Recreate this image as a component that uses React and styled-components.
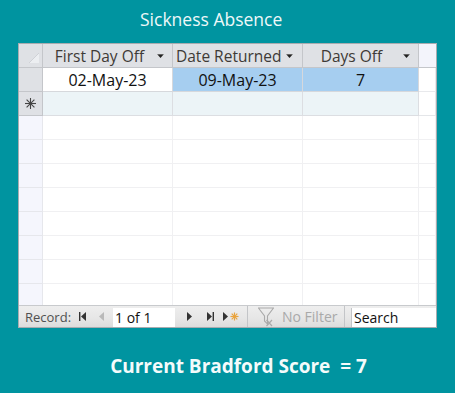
import React from "react";
import styled, { createGlobalStyle } from "styled-components";

const Global = createGlobalStyle`
  html, body { margin: 0; padding: 0; background: #0094a0; }
  body { font-family: "Open Sans", "Noto Sans", sans-serif; }
`;

const Page = styled.div`
  width: 455px;
  height: 393px;
  background: #0094a0;
  display: flex;
  flex-direction: column;
  overflow: hidden;
`;

const Title = styled.div`
  height: 43px;
  padding-left: 140px;
  padding-top: 7px;
  box-sizing: border-box;
  color: #eef8f9;
  font-size: 17.5px;
  line-height: 24px;
  font-family: "Open Sans", sans-serif;
`;

const Frame = styled.div`
  margin-left: 18px;
  width: 417px;
  border: 1px solid #a9acb0;
  display: flex;
  flex-direction: column;
  background: #fff;
`;

const Sheet = styled.div`
  height: 261px;
  overflow: hidden;
  display: flex;
  flex-direction: column;
`;

const Row = styled.div`
  display: grid;
  grid-template-columns: 24px 130px 130px 116px 1fr;
  height: 24px;
  flex: none;
`;

const Cell = styled.div`
  box-sizing: border-box;
  border-right: 1px solid ${(p) => p.$line || "#e2e4e8"};
  border-bottom: 1px solid ${(p) => p.$line || "#e2e4e8"};
  background: ${(p) => p.$bg || "#fff"};
  display: flex;
  align-items: center;
  justify-content: center;
  font-size: 16px;
  color: #111;
  position: relative;
`;

const Selector = styled(Cell)`
  background: ${(p) => p.$bg || "#dfe1e5"};
  border-color: ${(p) => p.$line || "#c4c6ca"};
`;

const HeadCell = styled(Cell)`
  background: ${(p) => p.$bg || "#dfe1e5"};
  border-color: #c4c6ca;
  color: #3e3a36;
  font-size: 15.5px;
  justify-content: ${(p) => (p.$left ? "flex-start" : "center")};
  padding-left: ${(p) => (p.$left ? "3px" : "0")};
  padding-right: ${(p) => p.$pr ?? 16}px;
`;

const Arrow = styled.svg`
  position: absolute;
  right: ${(p) => p.$r || 8}px;
  top: 10px;
`;

const Corner = styled.svg`
  position: absolute;
  right: 2px;
  bottom: 3px;
`;

const NavBar = styled.div`
  height: 22px;
  box-sizing: border-box;
  border-top: 1px solid #c8cacd;
  background: linear-gradient(#eeeeee, #e6e6e6 60%, #dcdcdc);
  display: flex;
  align-items: stretch;
  font-size: 14px;
`;

const NavLabel = styled.div`
  padding-left: 6px;
  width: 60px;
  box-sizing: border-box;
  display: flex;
  align-items: center;
  color: #505050;
  font-size: 13px;
`;

const IconBox = styled.div`
  width: ${(p) => p.$w}px;
  margin-left: ${(p) => p.$ml || 0}px;
  display: flex;
  align-items: center;
  justify-content: flex-start;
  flex: none;
`;

const TextBox = styled.div`
  width: 62px;
  margin: 2px 0 0 9px;
  background: #fff;
  display: flex;
  align-items: center;
  padding-left: 2px;
  box-sizing: border-box;
  color: #111;
  font-size: 14px;
`;

const Sep = styled.div`
  width: 1px;
  margin-left: ${(p) => p.$ml || 0}px;
  background: #c3c5c8;
`;

const Filter = styled.div`
  width: 96px;
  display: flex;
  align-items: center;
  padding-left: 10px;
  gap: 8px;
  box-sizing: border-box;
  color: #a9a9a9;
  font-size: 14px;
`;

const Search = styled.div`
  flex: 1;
  margin: 2px 0 0 6px;
  background: #fff;
  border-left: 1px solid #c3c5c8;
  display: flex;
  align-items: center;
  padding-left: 2px;
  color: #111;
  font-size: 14px;
`;

const Score = styled.div`
  flex: 1;
  display: flex;
  justify-content: center;
  padding-left: 22px;
  padding-top: 25px;
  box-sizing: border-box;
  color: #f4fbfb;
  font-weight: 700;
  font-size: 19px;
  font-family: "Open Sans", sans-serif;
  white-space: pre;
`;

const DropArrow = ({ r }) => (
  <Arrow $r={r} width="8" height="5" viewBox="0 0 8 5">
    <path d="M0 0 H7 L3.5 4 Z" fill="#222" />
    <path d="M0 0 H7" stroke="#fff" strokeWidth="0.6" />
  </Arrow>
);

const Tri = ({ dir = "right", color = "#333" }) => (
  <svg width="5" height="9" viewBox="0 0 5 9">
    {dir === "right" ? (
      <path d="M0 0 L5 4.5 L0 9 Z" fill={color} />
    ) : (
      <path d="M5 0 L0 4.5 L5 9 Z" fill={color} />
    )}
  </svg>
);

const emptyRows = Array.from({ length: 8 });

export default function App() {
  return (
    <Page>
      <Global />
      <Title>Sickness Absence</Title>
      <Frame>
        <Sheet>
          <Row>
            <Selector>
              <Corner width="12" height="12" viewBox="0 0 12 12">
                <path d="M11 1 L11 11 L1 11 Z" fill="#eceef1" />
                <path d="M11 1 L1 11" stroke="#c9ccd1" strokeWidth="0.8" />
              </Corner>
            </Selector>
            <HeadCell>
              First Day Off
              <DropArrow r={7} />
            </HeadCell>
            <HeadCell $left>
              Date Returned
              <DropArrow r={8} />
            </HeadCell>
            <HeadCell $pr={18}>
              Days Off
              <DropArrow r={7} />
            </HeadCell>
            <HeadCell $bg="#f3f4fb" $pr={0} style={{ borderRight: "none" }} />
          </Row>
          <Row>
            <Selector />
            <Cell $line="#d6d8dc">02-May-23</Cell>
            <Cell $bg="#a6cef0" $line="#d6d8dc">09-May-23</Cell>
            <Cell $bg="#a6cef0" $line="#d6d8dc">7</Cell>
            <Cell $line="#e8e9ec" />
          </Row>
          <Row>
            <Selector>
              <svg width="13" height="13" viewBox="0 0 13 13">
                <g stroke="#444" strokeWidth="1.1">
                  <path d="M6.5 1 V12" />
                  <path d="M1 6.5 H12" />
                  <path d="M2.6 2.6 L10.4 10.4" />
                  <path d="M10.4 2.6 L2.6 10.4" />
                </g>
              </svg>
            </Selector>
            <Cell $bg="#ecf4f7" $line="#dcdee2" />
            <Cell $bg="#ecf4f7" $line="#dcdee2" />
            <Cell $bg="#ecf4f7" $line="#dcdee2" />
            <Cell $line="#e4e6e9" />
          </Row>
          {emptyRows.map((_, i) => (
            <Row key={i}>
              <Selector $bg="#f5f6fd" $line="#e6e7ec" />
              <Cell $line="#f0f0f2" />
              <Cell $line="#f0f0f2" />
              <Cell $line="#f0f0f2" />
              <Cell $line="#f0f0f2" />
            </Row>
          ))}
        </Sheet>
        <NavBar>
          <NavLabel>Record:</NavLabel>
          <IconBox $w={8}>
            <svg width="7" height="9" viewBox="0 0 7 9">
              <rect x="0" y="0" width="1.4" height="9" fill="#333" />
              <path d="M7 0 L2 4.5 L7 9 Z" fill="#333" />
            </svg>
          </IconBox>
          <IconBox $w={5} $ml={12}>
            <Tri dir="left" color="#b9b9b9" />
          </IconBox>
          <TextBox>1 of 1</TextBox>
          <IconBox $w={5} $ml={12}>
            <Tri color="#333" />
          </IconBox>
          <IconBox $w={7} $ml={15}>
            <svg width="7" height="9" viewBox="0 0 7 9">
              <path d="M0 0 L5 4.5 L0 9 Z" fill="#333" />
              <rect x="5.6" y="0" width="1.4" height="9" fill="#333" />
            </svg>
          </IconBox>
          <IconBox $w={16} $ml={9}>
            <svg width="16" height="9" viewBox="0 0 16 9">
              <path d="M0 0 L5 4.5 L0 9 Z" fill="#333" />
              <g stroke="#e9a33c" strokeWidth="1.2">
                <path d="M11.5 0.5 V8.5" />
                <path d="M7.5 4.5 H15.5" />
                <path d="M8.7 1.7 L14.3 7.3" />
                <path d="M14.3 1.7 L8.7 7.3" />
              </g>
            </svg>
          </IconBox>
          <Sep $ml={8} />
          <Filter>
            <svg width="16" height="20" viewBox="0 0 16 20">
              <path d="M0.5 1 H15.5 L9.5 9 V17 L6.5 14 V9 Z" fill="none" stroke="#aaa" strokeWidth="1.1" />
              <path d="M8.5 13 L14 19 M14 13 L8.5 19" stroke="#aaa" strokeWidth="1.2" />
            </svg>
            No Filter
          </Filter>
          <Sep />
          <Search>Search</Search>
        </NavBar>
      </Frame>
      <Score>Current Bradford Score  = 7</Score>
    </Page>
  );
}
